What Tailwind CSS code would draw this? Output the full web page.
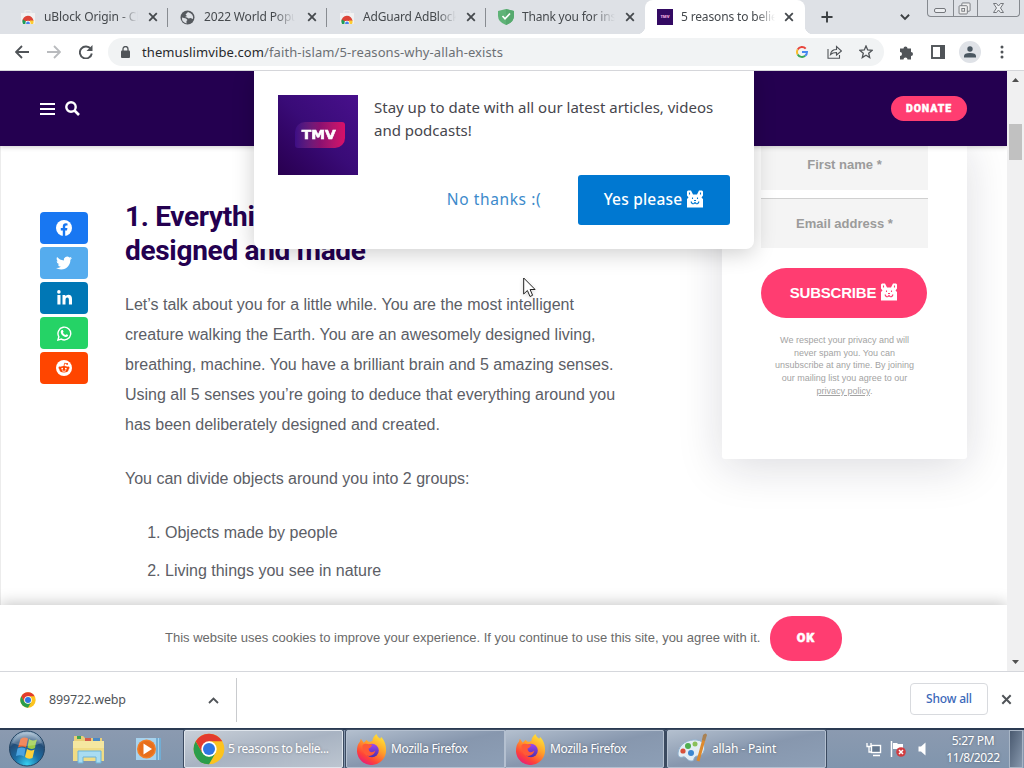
<!DOCTYPE html>
<html lang="en">
<head>
    <meta charset="UTF-8">
    <meta name="viewport" content="width=device-width, initial-scale=1.0">
    <title>5 reasons to believe</title>
    <script src="https://cdn.jsdelivr.net/npm/@tailwindcss/browser@4"></script>
</head>
<body class="w-[1024px] h-[768px] overflow-hidden bg-white font-['Noto_Sans',sans-serif] relative">

    <!-- shared icons -->
    <svg class="absolute size-0">
        <defs>
            <linearGradient id="ffOuter" x1=".8" y1="0" x2=".2" y2="1"><stop offset="0" stop-color="#ffe83a"/><stop offset=".4" stop-color="#ffa02a"/><stop offset=".75" stop-color="#ff4238"/><stop offset="1" stop-color="#e31587"/></linearGradient>
            <linearGradient id="ffGlobe" x1="0" y1="0" x2="0" y2="1"><stop offset="0" stop-color="#a048f0"/><stop offset="1" stop-color="#4a2fae"/></linearGradient>
        </defs>
        <symbol id="close" viewBox="0 0 10 10"><path d="M1.2 1.2l7.6 7.6M8.8 1.2L1.2 8.8" stroke="currentColor" stroke-width="1.8" fill="none"/></symbol>
        <symbol id="store" viewBox="0 0 16 16">
            <path d="M5 4V2.500Q5 1.500 6 1.500h4q1 0 1 1V4" fill="none" stroke="#ececec" stroke-width="1.200"/>
            <path d="M1 4h14v10q0 1-1 1H2q-1 0-1-1z" fill="#f1f1f1"/>
            <path d="M2.500 12.500a5.500 5.500 0 0 1 11-.5L10 12H6z" fill="#dd4437"/>
            <path d="M2.700 10.500A6 6 0 0 0 3 15h4l-1.500-3z" fill="#1e9e57"/>
            <path d="M10 11.500h3.500q.3 2-.5 3.500H8z" fill="#fccc32"/>
            <path d="M5.500 15a2.600 2.600 0 1 1 5 0z" fill="#fff"/><path d="M6.200 15a1.900 1.900 0 1 1 3.600 0z" fill="#4a80ec"/>
        </symbol>
        <symbol id="chrome" viewBox="0 0 48 48">
            <circle cx="24" cy="24" r="23" fill="#fcc31e"/>
            <path d="M4.080 12.500L14.050 29.700 24 35.500 34 29.800 24 47A23 23 0 0 1 4.080 12.500z" fill="#2a9d4b"/>
            <path d="M4.080 12.500A23 23 0 0 1 43.920 12.500H24L14 29.700z" fill="#e33b2e"/>
            <circle cx="24" cy="24" r="11.500" fill="#fff"/><circle cx="24" cy="24" r="9" fill="#2f76e2"/>
        </symbol>
        <symbol id="firefox" viewBox="0 0 32 32">
            <path d="M21 0c1 3 3 4 4 5l1-2c4 4 5 9 5 13a15 15 0 0 1-30 2c0-5 1-8 3-10l1-3 3 4 3-3c1 2 2 2 4 2l2-1c0-3 2-5 4-7z" fill="url(#ffOuter)"/>
            <circle cx="16.500" cy="17" r="7" fill="url(#ffGlobe)"/>
            <path d="M7 11c3-2 6 0 10 0-1 2-2 3-4 4 0 4 4 5 7 2-1 6-9 8-12 2-1-3-2-6-1-8z" fill="#ff5a36"/>
        </symbol>
        <!-- cat face used at the end of button labels -->
        <symbol id="cat" viewBox="0 0 18 18">
            <path d="M2 .5h3l2 4h4l2-4h3l1 1v4L15.500 7.500 17 9v8.500H1V9l1.500-1.500L1 5.500v-4z" fill="currentColor"/>
            <path d="M3.500 2.500v2M14.500 2.500v2M6.500 7.500V9M11.500 7.500V9M8 10.500h2M5 11.500q1 3 3 2l1-1 1 1q2 1 3-2" stroke="var(--cut)" stroke-width="1.100" fill="none"/>
        </symbol>
    </svg>

    <!-- tab strip -->
    <div class="h-[34px] bg-[#dee1e6] flex pl-[9px] text-[12px] text-[#45494d]">
        <div class="w-[159px] flex items-center pl-[11px] pr-[9px]">
            <svg class="size-4 shrink-0"><use href="#store"/></svg>
            <span class="ml-2 w-[94px] overflow-hidden whitespace-nowrap tracking-[-0.1px] mask-r-from-80% mask-r-to-100%">uBlock Origin - Chrome</span>
            <svg class="ml-[10px] size-[10px] shrink-0"><use href="#close"/></svg>
            <span class="ml-auto -mr-[9px] w-px h-[19px] bg-[#888c91]"></span>
        </div>
        <div class="w-[159px] flex items-center pl-[12px] pr-[9px]">
            <svg class="size-[15px] shrink-0" viewBox="0 0 15 15"><circle cx="7.500" cy="7.500" r="7" fill="#55595e"/><path d="M2 7.500l4 1 1.500 1.500-1 1v2.500Q1.500 12 2 7.500zM8 2l-2.500 2.500L7 6 5 7l2 .5 1.500 1 2-.5 2.500 1Q14 4 8 2z" fill="#dee1e6"/></svg>
            <span class="ml-[9px] w-[93px] overflow-hidden whitespace-nowrap tracking-[-0.15px] mask-r-from-75% mask-r-to-98%">2022 World Population</span>
            <svg class="ml-[10px] size-[10px] shrink-0"><use href="#close"/></svg>
            <span class="ml-auto -mr-[9px] w-px h-[19px] bg-[#888c91]"></span>
        </div>
        <div class="w-[159px] flex items-center pl-[12px] pr-[9px]">
            <svg class="size-4 shrink-0"><use href="#store"/></svg>
            <span class="ml-2 w-[93px] overflow-hidden whitespace-nowrap tracking-[-0.2px] mask-r-from-80% mask-r-to-100%">AdGuard AdBlocker</span>
            <svg class="ml-[10px] size-[10px] shrink-0"><use href="#close"/></svg>
            <span class="ml-auto -mr-[9px] w-px h-[19px] bg-[#888c91]"></span>
        </div>
        <div class="w-[159px] flex items-center pl-[12px] pr-[9px]">
            <svg class="size-4 shrink-0" viewBox="0 0 16 16"><path d="M8 0l8 2v5q0 6-8 9Q0 13 0 7V2z" fill="#5fb377"/><path d="M8 0l8 2v5q0 6-8 9z" fill="#56a96e"/><path d="M4.500 7L7 9.800 12 4.500" stroke="#fff" stroke-width="1.700" fill="none"/></svg>
            <span class="ml-2 w-[93px] overflow-hidden whitespace-nowrap tracking-[-0.2px] mask-r-from-75% mask-r-to-100%">Thank you for installing</span>
            <svg class="ml-[10px] size-[10px] shrink-0"><use href="#close"/></svg>
        </div>
        <div class="w-[160px] flex items-center pl-[12px] pr-[10px] bg-white rounded-t-lg relative">
            <span class="absolute -left-2 bottom-0 size-2 bg-[radial-gradient(circle_at_0_0,#dee1e6_8px,#fff_8.500px)]"></span>
            <span class="absolute -right-2 bottom-0 size-2 bg-[radial-gradient(circle_at_100%_0,#dee1e6_8px,#fff_8.500px)]"></span>
            <span class="size-4 shrink-0 bg-[#330a63] flex items-center justify-center text-[4px] font-black text-[#e9a5dd]">TMV</span>
            <span class="ml-2 w-[94px] overflow-hidden whitespace-nowrap tracking-[-0.15px] mask-r-from-80% mask-r-to-100%">5 reasons to believe</span>
            <svg class="ml-[9px] size-[10px] shrink-0"><use href="#close"/></svg>
        </div>
        <svg class="ml-[16px] mt-[11px] size-[12px]" viewBox="0 0 13 13"><path d="M6.500 .5v12M.5 6.500h12" stroke="#3c4043" stroke-width="2.100"/></svg>
        <svg class="ml-[67px] mt-[13px] w-[10px] h-[8px]" viewBox="0 0 11 8"><path d="M1 1.500l4.500 4.500L10 1.500" stroke="#3c4043" stroke-width="2.100" fill="none"/></svg>
        <div class="ml-[17px] w-[93px] h-[17px] flex border border-t-0 border-[#85898f] rounded-b-[4px] text-[#74777c]">
            <svg class="w-[25px] h-4" viewBox="0 0 25 16"><rect x="6.500" y="8.500" width="11" height="4" rx="1.500" fill="#eceef1" stroke="currentColor"/></svg>
            <svg class="w-[25px] h-4 border-x border-[#85898f]" viewBox="0 0 25 16"><rect x="8.500" y="2.500" width="9" height="9" rx="1" fill="#eee" stroke="currentColor"/><rect x="5.500" y="5.500" width="9" height="9" rx="1" fill="#eee" stroke="currentColor"/><rect x="8.500" y="8.500" width="3" height="3" fill="none" stroke="currentColor"/></svg>
            <svg class="w-[41px] h-4" viewBox="0 0 41 16"><path d="M15.500 3.500h3l2 2.500 2-2.500h3L22.500 8l3 4.500h-3l-2-2.500-2 2.500h-3l3-4.500z" fill="#eceef1" stroke="currentColor"/></svg>
        </div>
    </div>

    <!-- toolbar -->
    <div class="h-[37px] border-b border-[#d5d6da] flex items-center text-[#505458]">
        <svg class="ml-[15px] size-[14px]" viewBox="0 0 14 14"><path d="M14 7H1M7 1L1 7l6 6" stroke="currentColor" stroke-width="1.800" fill="none"/></svg>
        <svg class="ml-[18px] size-[14px] text-[#b9bbbe]" viewBox="0 0 14 14"><path d="M0 7h13M7 1l6 6-6 6" stroke="currentColor" stroke-width="1.800" fill="none"/></svg>
        <svg class="ml-[18px] size-[14px]" viewBox="0 0 14 14"><path d="M11.800 4A6 6 0 1 0 12.800 8.500" stroke="currentColor" stroke-width="1.900" fill="none"/><path d="M13.500 0v6h-6z" fill="currentColor"/></svg>
        <div class="ml-[15px] w-[776px] h-[28px] rounded-full bg-[#f1f3f4] flex items-center pl-[13px]">
            <svg class="w-[9px] h-[12px]" viewBox="0 0 9 12"><path d="M2 5V3a2.500 2.500 0 0 1 5 0v2" stroke="currentColor" stroke-width="1.300" fill="none"/><rect y="4.500" width="9" height="7.500" rx="1" fill="currentColor"/></svg>
            <p class="ml-[12px] pt-px w-[654px] text-[13px] tracking-[0.1px] text-[#6c7074] whitespace-nowrap"><span class="text-[#27292c]">themuslimvibe.com</span>/faith-islam/5-reasons-why-allah-exists</p>
            <svg class="size-[12px] shrink-0" viewBox="0 0 12 12" fill="none" stroke-width="2"><path d="M9.700 2.700A5 5 0 0 0 1.700 3.500" stroke="#e8453c"/><path d="M1.700 3.500a5 5 0 0 0 0 5" stroke="#f9bb2d"/><path d="M1.700 8.500a5 5 0 0 0 7.500 1.300" stroke="#3aa757"/><path d="M9.200 9.800A5 5 0 0 0 11 6H6" stroke="#4688f1"/></svg>
            <svg class="ml-[19px] w-[15px] h-[14px] shrink-0" viewBox="0 0 15 14"><path d="M1 4v9.300h11.500V10M3.500 9.500c.5-3.500 3-5 6-5V1.500l5 4.500-5 4V7.500c-3 0-4.500.5-6 2z" stroke="currentColor" stroke-width="1.100" fill="none"/></svg>
            <svg class="ml-[17px] size-[14px] shrink-0" viewBox="0 0 14 14"><path d="M7 1l1.700 4 4.300.4-3.300 2.800 1 4.300L7 10.200l-3.700 2.300 1-4.300L1 5.400 5.300 5z" stroke="currentColor" stroke-width="1.300" fill="none"/></svg>
        </div>
        <svg class="ml-[15px] size-[15px]" viewBox="0 0 15 15"><path d="M1 3.500h3.500a2 2 0 1 1 4 0H12V7a2 2 0 1 1 0 4v3.500H8.500a1.900 1.900 0 1 0-4 0H1V11a2 2 0 1 0 0-4z" fill="currentColor"/></svg>
        <svg class="ml-[17px] w-[14px] h-[14px]" viewBox="0 0 14 14"><rect x="1" y="1" width="12" height="12" fill="none" stroke="currentColor" stroke-width="1.900"/><path d="M9 0h5v14H9z" fill="currentColor"/></svg>
        <span class="ml-[14px] size-[22px] rounded-full bg-[#dfe2e7] flex items-center justify-center"><svg class="size-3" viewBox="0 0 12 12"><circle cx="6" cy="3" r="2.700" fill="#4a5761"/><path d="M0 11.500V10q0-3 6-3t6 3v1.500z" fill="#4a5761"/></svg></span>
        <svg class="ml-[19px] w-1 h-[14px]" viewBox="0 0 4 14" fill="#505458"><circle cx="2" cy="2" r="1.500"/><circle cx="2" cy="7" r="1.500"/><circle cx="2" cy="12" r="1.500"/></svg>
    </div>

    <!-- page -->
    <div class="h-[600px] flex relative overflow-hidden font-['Liberation_Sans',sans-serif]">
        <div class="w-[1007px] h-full flex flex-col">
            <header class="h-[75px] shrink-0 bg-[#240050] flex items-center pl-10 pr-10 z-10 shadow-[0_1px_5px_rgba(0,0,0,.2)]">
                <svg class="w-[15px] h-[12px]" viewBox="0 0 15 12"><path d="M0 1h15M0 6h15M0 11h15" stroke="#fff" stroke-width="2"/></svg>
                <svg class="ml-[10px] size-[15px]" viewBox="0 0 15 15"><circle cx="6" cy="6" r="4.700" fill="none" stroke="#fff" stroke-width="2.400"/><path d="M9.500 9.500l4.500 4.500" stroke="#fff" stroke-width="2.600"/></svg>
                <span class="ml-auto w-[76px] h-[25px] rounded-full bg-[#ff3d71] text-white text-[10.500px] font-black font-['Roboto',sans-serif] tracking-[0.9px] [-webkit-text-stroke:0.4px_#fff] flex items-center justify-center">DONATE</span>
            </header>

            <div class="h-[459px] shrink-0 flex items-start border-l border-[#ececec] pl-[39px] overflow-hidden">
                <div class="mt-[66px] w-12 flex flex-col gap-[3px]">
                    <a class="h-8 rounded-[4px] bg-[#1877f2] flex items-center justify-center"><svg class="size-4" viewBox="0 0 16 16"><circle cx="8" cy="8" r="8" fill="#fff"/><path d="M6.800 16v-5.600H4.800V8h2V6.300c0-2 1.200-3.100 3-3.100l1.700.2v2h-1c-1 0-1.300.6-1.300 1.200V8h2.200l-.4 2.400H9.200V16z" fill="#1877f2"/></svg></a>
                    <a class="h-8 rounded-[4px] bg-[#55acee] flex items-center justify-center"><svg class="size-4" viewBox="0 0 24 24"><path fill="#fff" d="M23.950 4.570a10 10 0 0 1-2.820.770 4.960 4.960 0 0 0 2.160-2.720c-.95.550-2 .950-3.130 1.180a4.920 4.920 0 0 0-8.380 4.480C7.690 8.090 4.070 6.130 1.640 3.160a4.820 4.820 0 0 0-.670 2.480c0 1.710.870 3.210 2.190 4.100a4.900 4.900 0 0 1-2.230-.620v.060a4.920 4.920 0 0 0 3.950 4.830 5 5 0 0 1-2.210.080 4.940 4.940 0 0 0 4.600 3.420A9.870 9.870 0 0 1 0 19.540a14 14 0 0 0 7.550 2.210c9.050 0 14-7.500 14-13.980 0-.210 0-.420-.020-.630a9.940 9.940 0 0 0 2.460-2.550z"/></svg></a>
                    <a class="h-8 rounded-[4px] bg-[#0077b5] flex items-center justify-center"><svg class="size-[15px] -mt-[2px]" viewBox="0 0 15 15" fill="#fff"><circle cx="1.900" cy="1.900" r="1.800"/><path d="M.4 5h3.100v9.500H.4zM5.500 5h2.900v1.300Q9.300 4.700 11.300 4.700 15 4.700 15 9v5.500h-3.100V9.700q0-2.300-1.600-2.300-1.800 0-1.800 2.300v4.800h-3z"/></svg></a>
                    <a class="h-8 rounded-[4px] bg-[#25d366] flex items-center justify-center"><svg class="size-[15px]" viewBox="0 0 16 16"><path d="M1 15l1-3.500A6.800 6.800 0 1 1 4.600 14z" fill="none" stroke="#fff" stroke-width="1.500"/><path d="M5.200 4.200h1l.8 1.900-.7 1q1 1.800 2.800 2.500l1-.9 1.800.9c0 1.600-1.500 2.200-2.600 2-3-.5-5.300-3-5.300-5.300 0-1 .6-1.700 1.200-2.100z" fill="#fff"/></svg></a>
                    <a class="h-8 rounded-[4px] bg-[#ff4500] flex items-center justify-center"><svg class="size-4" viewBox="0 0 16 16"><circle cx="8" cy="8" r="8" fill="#fff"/><ellipse cx="8" cy="9.300" rx="4.600" ry="3.300" fill="#ff4500"/><circle cx="3.700" cy="7.700" r="1.200" fill="#ff4500"/><circle cx="12.300" cy="7.700" r="1.200" fill="#ff4500"/><path d="M8 6.200l.6-3 2.400.6" stroke="#ff4500" stroke-width=".8" fill="none"/><circle cx="11.200" cy="3.900" r=".9" fill="#ff4500"/><circle cx="6.200" cy="8.700" r=".9" fill="#fff"/><circle cx="9.800" cy="8.700" r=".9" fill="#fff"/><path d="M6 10.700q2 1.400 4 0" stroke="#fff" stroke-width=".8" fill="none"/></svg></a>
                </div>

                <article class="ml-[37px] mt-[54px] w-[500px] text-[16px] leading-[30px] text-[#5c5e66]">
                    <h2 class="font-['Roboto',sans-serif] font-bold text-[28px] leading-[34px] tracking-[-0.3px] text-[#240050] whitespace-nowrap">1. Everything around you has been<br>designed and made</h2>
                    <p class="mt-[22px] whitespace-nowrap">Let’s talk about you for a little while. You are the most intelligent<br>creature walking the Earth. You are an awesomely designed living,<br>breathing, machine. You have a brilliant brain and 5 amazing senses.<br>Using all 5 senses you’re going to deduce that everything around you<br>has been deliberately designed and created.</p>
                    <p class="mt-6">You can divide objects around you into 2 groups:</p>
                    <ol class="mt-6 pl-10 list-decimal flex flex-col gap-2">
                        <li>Objects made by people</li>
                        <li>Living things you see in nature</li>
                    </ol>
                </article>

                <aside class="ml-[97px] -mt-[6px] w-[245px] h-[319px] shrink-0 rounded-[3px] bg-white px-[39px] shadow-[0_8px_45px_rgba(20,20,50,.15)] text-center">
                    <div class="h-[50px] bg-[#f4f4f4] flex items-center justify-center text-[13px] font-bold text-[#9b9b9b]">First name *</div>
                    <div class="mt-2 h-[50px] bg-[#f4f4f4] border-t border-[#d0d0d0] flex items-center justify-center text-[13px] font-bold text-[#9b9b9b]">Email address *</div>
                    <div class="mt-5 w-[166px] h-[50px] rounded-full bg-[#ff3d71] [--cut:#ff3d71] text-white flex items-center justify-center gap-1 text-[15px] font-bold tracking-[-0.2px]">SUBSCRIBE <svg class="size-[18px] -mt-[2px]"><use href="#cat"/></svg></div>
                    <p class="mt-4 -mx-1 text-[9px] leading-[12.700px] text-[#a3a3a3] whitespace-nowrap">We respect your privacy and will<br>never spam you. You can<br>unsubscribe at any time. By joining<br>our mailing list you agree to our<br><u>privacy policy</u>.</p>
                </aside>
            </div>

            <div class="h-[66px] bg-white z-10 flex items-center pl-[165px] shadow-[0_-2px_14px_rgba(0,0,0,.22)]">
                <p class="w-[605px] text-[13px] text-[#6a6a6a] whitespace-nowrap">This website uses cookies to improve your experience. If you continue to use this site, you agree with it.</p>
                <span class="w-[72px] h-[45px] rounded-[22px] bg-[#ff3d71] text-white text-[12.500px] font-black font-['Roboto',sans-serif] tracking-[1px] [-webkit-text-stroke:0.5px_#fff] flex items-center justify-center">OK</span>
            </div>
        </div>

        <!-- scrollbar -->
        <div class="w-[17px] bg-[#f0f0f1] z-20 flex flex-col items-center">
            <svg class="mt-[7px] w-[7px] h-[4px]" viewBox="0 0 7 4"><path d="M0 4L3.500 0 7 4z" fill="#505050"/></svg>
            <span class="mt-[42px] w-[13px] h-[36px] bg-[#c1c1c1]"></span>
            <svg class="mt-auto mb-[7px] w-[7px] h-[4px]" viewBox="0 0 7 4"><path d="M0 0h7L3.500 4z" fill="#505050"/></svg>
        </div>

        <!-- notification prompt -->
        <div class="absolute z-30 left-[254px] top-0 w-[500px] h-[178px] rounded-b-lg bg-white shadow-[0_4px_22px_rgba(0,0,0,.2)] p-6 font-['Noto_Sans',sans-serif]">
            <div class="flex">
                <div class="size-20 shrink-0 bg-linear-to-bl from-[#48108c] via-[#390b77] to-[#28004f] flex items-center justify-center">
                    <span class="ml-[4px] w-[50px] h-[26px] rounded-tl-[10px] rounded-tr-[3px] rounded-br-[10px] rounded-bl-[3px] bg-linear-to-r from-[#3d0d85] via-[#8b1070] to-[#d90f68] flex items-center justify-center text-white text-[12px] font-black font-['DejaVu_Sans',sans-serif] [-webkit-text-stroke:0.6px_#fff]"><span class="-ml-[3px] scale-x-115">TMV</span></span>
                </div>
                <p class="ml-4 mt-[1px] text-[15px] leading-[23px] text-[#46464d] whitespace-nowrap">Stay up to date with all our latest articles, videos<br>and podcasts!</p>
            </div>
            <div class="flex justify-end h-[50px] text-[16px] tracking-[0.6px]">
                <span class="w-[168px] flex items-center justify-center text-[15.500px] text-[#3c8acb]">No thanks :(</span>
                <span class="w-[152px] rounded-[3px] bg-[#0078d1] [--cut:#0078d1] text-white flex items-center justify-center gap-1 text-[15.500px] font-medium tracking-[0.2px]">Yes please <svg class="size-[18px] -mt-[2px]"><use href="#cat"/></svg></span>
            </div>
        </div>

        <svg class="absolute z-30 left-[523px] top-[206px] w-[13px] h-[21px] drop-shadow-sm" viewBox="0 0 13 21"><path d="M.7 1v16l3.700-3.500L7 19.500l2.600-1.200L7.100 12.500h5z" fill="#fff" stroke="#222" stroke-width="1"/></svg>
    </div>

    <!-- downloads -->
    <div class="h-[57px] border-t border-[#d5d7dc] bg-white flex items-center text-[#505458]">
        <svg class="ml-5 size-4"><use href="#chrome"/></svg>
        <span class="ml-[13px] w-[158px] pt-px text-[12.500px] tracking-[-0.15px]">899722.webp</span>
        <svg class="ml-px w-[11px] h-[7px]" viewBox="0 0 11 7"><path d="M1 6l4.500-4.500L10 6" stroke="currentColor" stroke-width="1.800" fill="none"/></svg>
        <span class="ml-[17px] w-px h-[44px] bg-[#c9cbce]"></span>
        <span class="ml-auto -mt-[2px] w-[78px] h-8 rounded-[4px] border border-[#d8dade] text-[12px] font-medium text-[#3b68b9] tracking-[-0.2px] flex items-center justify-center">Show all</span>
        <svg class="ml-[13px] mr-[12px] -mt-[2px] size-[11px]" viewBox="0 0 10 10"><use href="#close"/></svg>
    </div>

    <!-- taskbar -->
    <div class="h-10 border-t-2 border-[#2a3a52] bg-linear-to-b from-[#8b9ab0] to-[#8095ad] flex text-white text-[12px] text-shadow-[0_0_3px_rgba(0,0,0,.35)]">
        <svg class="ml-[8px] size-[38px]" viewBox="0 0 38 38">
            <defs><radialGradient id="orb" cx=".5" cy=".95" r=".9"><stop offset="0" stop-color="#36d0f0"/><stop offset=".4" stop-color="#1c6ea5"/><stop offset=".75" stop-color="#234d78"/><stop offset="1" stop-color="#9fb8cd"/></radialGradient></defs>
            <circle cx="19" cy="18.500" r="17.500" fill="url(#orb)" stroke="#234463"/>
            <path d="M12.500 9q3.500-2.500 7.500-.5L18 17.500q-3.500-2-8 0z" fill="#ee6a32"/><path d="M21 9q3 2.500 8 .5-1.500 4-2 8.500-4 2-7.500-.5z" fill="#9ccb45"/><path d="M9.500 18.500q4-2 8 0L16 26.500q-3.500-2-8-.5z" fill="#4aa3e0"/><path d="M19 19q3.500 2.500 7.500.5L24.500 28q-4 2-7.500-1z" fill="#fdd03a"/>
            <path d="M4 13a16 16 0 0 1 30 0Q19 19 4 13z" fill="#fff" opacity=".22"/>
        </svg>
        <svg class="ml-[27px] mt-[4px] w-8 h-[30px]" viewBox="0 0 32 30">
            <path d="M1 2h9l2 2h17v21H1z" fill="#e9cf78"/><path d="M4 2h4v3H4z" fill="#3fa652"/><path d="M12 4h6v3h-6z" fill="#d65b4a"/><path d="M20 4h7v3h-7z" fill="#4b89c4"/>
            <path d="M0 7h31v20H0z" fill="#f5e7a0"/><path d="M0 14h31v13H0z" fill="#f1dc85"/>
            <path d="M5 29V17h23v12h-5v-6H10v6z" fill="#a9dcf2" stroke="#6cb3d8"/>
        </svg>
        <svg class="ml-[31px] mt-[6px] w-[27px] h-[26px]" viewBox="0 0 27 26"><rect x="0" y="2" width="25" height="22" fill="#a7d3ee"/><path d="M21 2v22M24 2v22" stroke="#3e87b8" stroke-width="1"/><circle cx="10.500" cy="13" r="9.500" fill="#f07f2a"/><circle cx="10.500" cy="13" r="8" fill="#e86f1c"/><path d="M7.500 7.500v11l8.500-5.500z" fill="#fff"/></svg>
        <div class="ml-[21px] w-[159px] h-[38px] border border-[#dfe5ec] rounded-[2px] bg-linear-to-br from-[#c8cfd8] via-[#a8b3c2] to-[#bcc5d0] flex items-center pl-[8px] shadow-[0_0_0_1px_#3b4a60]">
            <svg class="size-8 shrink-0"><use href="#chrome"/></svg><span class="ml-[3px] whitespace-nowrap tracking-[-0.4px]">5 reasons to belie...</span>
        </div>
        <div class="ml-[3px] w-[159px] h-[38px] border border-[#b4c0d0] rounded-l-[2px] bg-linear-to-br from-[#b3bfce] via-[#8797ae] to-[#8d9fb6] flex items-center pl-[9px] shadow-[0_0_0_1px_#3b4a60]">
            <svg class="size-[31px] shrink-0"><use href="#firefox"/></svg><span class="ml-[4px] whitespace-nowrap tracking-[-0.3px]">Mozilla Firefox</span>
        </div>
        <div class="w-[159px] h-[38px] border border-[#b4c0d0] rounded-r-[2px] bg-linear-to-br from-[#b3bfce] via-[#8797ae] to-[#8d9fb6] flex items-center pl-[9px] shadow-[1px_0_0_1px_#3b4a60]">
            <svg class="size-[31px] shrink-0"><use href="#firefox"/></svg><span class="ml-[4px] whitespace-nowrap tracking-[-0.3px]">Mozilla Firefox</span>
        </div>
        <div class="ml-[3px] w-[159px] h-[38px] border border-[#b4c0d0] rounded-[2px] bg-linear-to-br from-[#b3bfce] via-[#8797ae] to-[#8d9fb6] flex items-center pl-[9px] shadow-[0_0_0_1px_#3b4a60]">
            <svg class="size-8 shrink-0" viewBox="0 0 32 32"><path d="M1 20C2 11 11 6 20 7c8 1 9 8 6 13-2 4-6 2-8 4s0 4-4 4-5-5-8-4-5 0-5-4z" fill="#e4edf5" stroke="#8fb0cd"/><circle cx="11" cy="13" r="3" fill="#4fae50"/><circle cx="18" cy="11" r="2.500" fill="#8ac05a"/><circle cx="6" cy="18" r="2.600" fill="#d84f3a"/><circle cx="14" cy="20" r="3" fill="#3c86d0"/><path d="M27 6L21 28" stroke="#dd8a2e" stroke-width="3"/><path d="M25 7l1-5q3-3 4 0l-2 6z" fill="#a98152"/></svg>
            <span class="ml-[3px] whitespace-nowrap tracking-[-0.15px]">allah - Paint</span>
        </div>
        <svg class="ml-[40px] mt-[12px] w-[16px] h-[15px]" viewBox="0 0 16 15"><rect x="5.500" y="3.500" width="9" height="7" fill="#65788f" stroke="#fff" stroke-width="1.400"/><path d="M7 13.500h7M1 1v3.500h4V1M3 4v6h3" stroke="#fff" stroke-width="1.300" fill="none"/></svg>
        <svg class="ml-[8px] mt-[11px] w-[17px] h-[16px]" viewBox="0 0 17 16"><path d="M1.500 0v16" stroke="#fff" stroke-width="1.500"/><path d="M3 2h4l1 1h5v6H8L7 8H3z" fill="#fff"/><circle cx="11" cy="11" r="4.800" fill="#d13c40"/><path d="M9 9l4 4M13 9l-4 4" stroke="#fff" stroke-width="1.500"/></svg>
        <svg class="ml-[11px] mt-[12px] w-[9px] h-[14px]" viewBox="0 0 9 14"><path d="M.5 4.500h2.500L7.500 .5v13L3 9.500H.5z" fill="#fff"/></svg>
        <div class="ml-[16px] w-[60px] pt-[2px] text-center text-[12px] leading-[17px] tracking-[-0.4px] whitespace-nowrap">5:27 PM<br>11/8/2022</div>
        <div class="ml-auto mr-[1px] w-[14px] h-[38px] border border-[#a9b6c6] bg-linear-to-br from-[#4a5a70] to-[#8798ad]"></div>
    </div>
</body>
</html>
